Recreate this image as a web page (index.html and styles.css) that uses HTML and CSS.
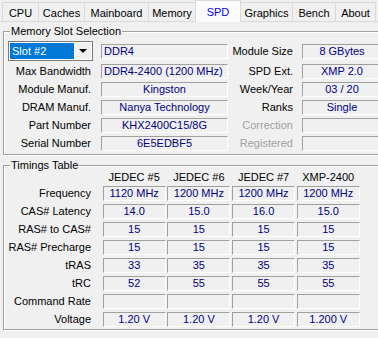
FILE: index.html
```html
<!DOCTYPE html>
<html>
<head>
<meta charset="utf-8">
<link rel="stylesheet" href="styles.css">
</head>
<body>
<div class="tabs">
  <div class="tab t-cpu">CPU</div>
  <div class="tab t-caches">Caches</div>
  <div class="tab t-mb">Mainboard</div>
  <div class="tab t-mem">Memory</div>
  <div class="tab t-spd active">SPD</div>
  <div class="tab t-gfx">Graphics</div>
  <div class="tab t-bench">Bench</div>
  <div class="tab t-about">About</div>
</div>

<fieldset class="group g1">
  <legend>Memory Slot Selection</legend>
  <div class="slot-grid">
    <div class="combo"><span class="combo-sel">Slot #2</span><span class="combo-btn"><span class="arrow"></span></span></div>
    <div class="field left">DDR4</div>
    <div class="lbl">Module Size</div>
    <div class="field">8 GBytes</div>

    <div class="lbl">Max Bandwidth</div>
    <div class="field left">DDR4-2400 (1200 MHz)</div>
    <div class="lbl">SPD Ext.</div>
    <div class="field">XMP 2.0</div>

    <div class="lbl">Module Manuf.</div>
    <div class="field">Kingston</div>
    <div class="lbl">Week/Year</div>
    <div class="field">03 / 20</div>

    <div class="lbl">DRAM Manuf.</div>
    <div class="field">Nanya Technology</div>
    <div class="lbl">Ranks</div>
    <div class="field">Single</div>

    <div class="lbl">Part Number</div>
    <div class="field">KHX2400C15/8G</div>
    <div class="lbl disabled">Correction</div>
    <div class="field"></div>

    <div class="lbl">Serial Number</div>
    <div class="field">6E5EDBF5</div>
    <div class="lbl disabled">Registered</div>
    <div class="field"></div>
  </div>
</fieldset>

<fieldset class="group g2">
  <legend>Timings Table</legend>
  <div class="timing-grid">
    <div></div>
    <div class="head">JEDEC #5</div>
    <div class="head">JEDEC #6</div>
    <div class="head">JEDEC #7</div>
    <div class="head">XMP-2400</div>

    <div class="lbl">Frequency</div>
    <div class="field">1120 MHz</div>
    <div class="field">1200 MHz</div>
    <div class="field">1200 MHz</div>
    <div class="field">1200 MHz</div>

    <div class="lbl">CAS# Latency</div>
    <div class="field">14.0</div>
    <div class="field">15.0</div>
    <div class="field">16.0</div>
    <div class="field">15.0</div>

    <div class="lbl">RAS# to CAS#</div>
    <div class="field">15</div>
    <div class="field">15</div>
    <div class="field">15</div>
    <div class="field">15</div>

    <div class="lbl">RAS# Precharge</div>
    <div class="field">15</div>
    <div class="field">15</div>
    <div class="field">15</div>
    <div class="field">15</div>

    <div class="lbl">tRAS</div>
    <div class="field">33</div>
    <div class="field">35</div>
    <div class="field">35</div>
    <div class="field">35</div>

    <div class="lbl">tRC</div>
    <div class="field">52</div>
    <div class="field">55</div>
    <div class="field">55</div>
    <div class="field">55</div>

    <div class="lbl">Command Rate</div>
    <div class="field"></div>
    <div class="field"></div>
    <div class="field"></div>
    <div class="field"></div>

    <div class="lbl">Voltage</div>
    <div class="field">1.20 V</div>
    <div class="field">1.20 V</div>
    <div class="field">1.20 V</div>
    <div class="field">1.200 V</div>
  </div>
</fieldset>
</body>
</html>
```

FILE: styles.css
```css
html, body {
  margin: 0;
  padding: 0;
  overflow: hidden;
  background: #f0f0f0;
}
body {
  width: 378px;
  height: 338px;
  font-family: "Liberation Sans", Arial, sans-serif;
  font-size: 11px;
  color: #000;
}

/* Tabs */
.tabs {
  display: flex;
  height: 21px;
  border-bottom: 1px solid #d9d9d9;
  padding-left: 2px;
}
.tab {
  box-sizing: border-box;
  margin-top: 2px;
  height: 19px;
  border: 1px solid #d9d9d9;
  border-bottom: none;
  border-right: none;
  display: flex;
  align-items: center;
  justify-content: center;
  padding-top: 1px;
  background: #f0f0f0;
}
.tab:last-child { border-right: 1px solid #d9d9d9; }
.t-cpu { width: 36px; }
.t-caches { width: 46px; }
.t-mb { width: 64px; }
.t-mem { width: 47px; }
.t-spd { width: 46px; }
.t-gfx { width: 51px; border-left: none; }
.t-bench { width: 43px; }
.t-about { width: 41px; }
.tab.active {
  margin-top: 0;
  height: 22px;
  border-right: 1px solid #d9d9d9;
  background: #fbfbfb;
  color: #0000ff;
  padding-top: 0;
  position: relative;
  z-index: 1;
}

/* Group boxes */
.group {
  margin: 0;
  padding: 0;
  border: 1px solid #a0a0a0;
  box-shadow: inset 1px 1px 0 #fff, 1px 1px 0 #fff;
  min-width: 0;
  width: 390px;
  box-sizing: border-box;
}
.group legend {
  margin-left: 2px;
  padding: 0 1px;
  background: #f0f0f0;
  line-height: 12px;
}
.g1 {
  margin: 3px 0 0 3px;
  padding: 4px 0 3px 4px;
}
.g2 {
  margin: 4px 0 0 3px;
  padding: 0 0 2px 4px;
}

.slot-grid {
  display: grid;
  grid-template-columns: 93px 127px 74px 80px;
  grid-template-rows: 20px repeat(5, 15px);
  row-gap: 3px;
}
.lbl {
  text-align: right;
  padding-right: 10px;
  line-height: 15px;
  white-space: nowrap;
}
.slot-grid .lbl { padding-right: 9px; }
.slot-grid .lbl:nth-child(4n+1) { padding-right: 10px; }
.lbl.disabled { color: #a0a0a0; }

.field {
  box-sizing: border-box;
  height: 15px;
  border-top: 1px solid #a0a0a0;
  border-left: 1px solid #a0a0a0;
  border-bottom: 1px solid #fff;
  border-right: 1px solid #fff;
  color: #000080;
  text-align: center;
  line-height: 13px;
  white-space: nowrap;
  overflow: hidden;
}
.field.left { text-align: left; padding-left: 2px; }
.slot-grid .field:nth-child(2) { margin-top: 3px; }
.slot-grid .lbl:nth-child(3) { margin-top: 3px; }
.slot-grid .field:nth-child(4) { margin-top: 3px; }

/* combo */
.combo {
  box-sizing: border-box;
  width: 85px;
  height: 20px;
  border: 1px solid #7a7a7a;
  background: #fff;
  display: flex;
  padding: 1px;
}
.combo-sel {
  flex: 1;
  background: #0078d7;
  color: #fff;
  line-height: 16px;
  padding-left: 2px;
}
.combo-btn {
  width: 16px;
  margin-left: 1px;
  display: flex;
  align-items: center;
  justify-content: center;
  background: #f0f0f0;
}
.arrow {
  width: 0;
  height: 0;
  border-left: 4px solid transparent;
  border-right: 4px solid transparent;
  border-top: 4px solid #000;
}

/* timings */
.timing-grid {
  display: grid;
  grid-template-columns: 93px repeat(4, 63px);
  column-gap: 1.7px;
  grid-template-rows: 12px;
  grid-auto-rows: 15px;
  row-gap: 3px;
}
.timing-grid .lbl { padding-right: 10px; }
.head {
  text-align: center;
  line-height: 12px;
  white-space: nowrap;
}
```
